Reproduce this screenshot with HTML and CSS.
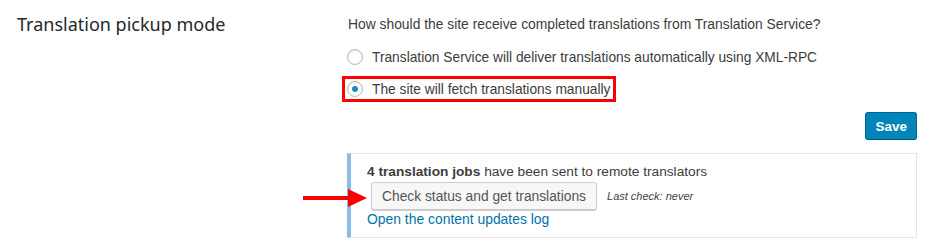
FILE: index.html
```html
<!DOCTYPE html>
<html lang="en">
  <head>
    <meta charset="UTF-8" />
    <title>Translation pickup mode</title>
    <link rel="stylesheet" href="styles.css">
  </head>
  <body>
    <div class="row">
      <h2 class="row-title">Translation pickup mode</h2>
      <div class="row-body">
        <p class="question">How should the site receive completed translations from Translation Service?</p>
        <label class="choice">
          <span class="radio"></span>
          Translation Service will deliver translations automatically using XML-RPC
        </label>
        <label class="choice choice-marked">
          <span class="radio radio-on"></span>
          The site will fetch translations manually
        </label>
        <div class="save-bar">
          <button class="btn-primary">Save</button>
        </div>
        <div class="notice">
          <p class="notice-text"><strong>4 translation jobs</strong> have been sent to remote translators</p>
          <div class="check-line">
            <svg class="arrow" width="64" height="20" viewBox="0 0 64 20">
              <line x1="0" y1="10" x2="50" y2="10" stroke="#f00" stroke-width="4"/>
              <polygon points="45,1 64,10 45,19" fill="#f00"/>
            </svg>
            <button class="btn">Check status and get translations</button>
            <span class="last-check">Last check: never</span>
          </div>
          <a class="log-link" href="#">Open the content updates log</a>
        </div>
      </div>
    </div>
  </body>
</html>
```

FILE: styles.css
```css
body {
  margin: 0;
  background: #fff;
  font-family: "Liberation Sans", Arial, sans-serif;
  color: #23282d;
}

.row {
  display: flex;
  padding: 14px 0 0 17px;
}

.row-title {
  width: 330px;
  margin: 0;
  font-family: "Noto Sans", sans-serif;
  font-size: 18px;
  line-height: 20px;
  font-weight: 400;
  color: #23282d;
}

.row-body {
  width: 570px;
}

.question {
  margin: 0 0 10px 1px;
  font-size: 13.85px;
  line-height: 20px;
  color: #3c3c3c;
}

.choice {
  display: flex;
  align-items: center;
  gap: 9px;
  height: 26px;
  margin-bottom: 6px;
  font-size: 13.75px;
  color: #3c3c3c;
}

.choice-marked {
  width: fit-content;
  height: 20px;
  margin-left: -5px;
  padding: 0 3px 0 2px;
  border: 3px solid #f00;
}

.radio {
  box-sizing: border-box;
  width: 16px;
  height: 16px;
  border: 1px solid #b4b9be;
  border-radius: 50%;
  box-shadow: inset 0 1px 2px rgba(0, 0, 0, 0.1);
  display: flex;
  align-items: center;
  justify-content: center;
}

.radio-on::before {
  content: "";
  width: 6px;
  height: 6px;
  border-radius: 50%;
  background: #1e8cbe;
}

.save-bar {
  display: flex;
  justify-content: flex-end;
  margin-top: 10px;
}

.btn-primary {
  box-sizing: border-box;
  height: 28px;
  padding: 0 9px;
  background: #0085ba;
  border: 1px solid #006799;
  border-bottom-color: #005a87;
  border-radius: 3px;
  color: #fff;
  font-family: "Liberation Sans", Arial, sans-serif;
  font-size: 13.5px;
  font-weight: 700;
}

.notice {
  margin-top: 13px;
  padding: 8px 0 9px 16px;
  border: 1px solid #e5e5e5;
  border-left: 4px solid #8bbbe8;
}

.notice-text {
  margin: 0;
  font-size: 13.7px;
  line-height: 20px;
  color: #3c3c3c;
}

.check-line {
  position: relative;
  display: flex;
  align-items: center;
  margin-left: 4px;
}

.arrow {
  position: absolute;
  left: -68px;
  top: 6px;
}

.btn {
  box-sizing: border-box;
  height: 28px;
  padding: 0 10px;
  background: #f7f7f7;
  border: 1px solid #ccc;
  border-radius: 3px;
  box-shadow: 0 1px 0 #ccc;
  color: #555;
  font-family: "Liberation Sans", Arial, sans-serif;
  font-size: 13.8px;
}

.last-check {
  margin-left: 10px;
  font-size: 11px;
  font-style: italic;
  color: #444;
}

.log-link {
  display: block;
  font-size: 13.9px;
  line-height: 18px;
  color: #0073aa;
  text-decoration: none;
}
```
